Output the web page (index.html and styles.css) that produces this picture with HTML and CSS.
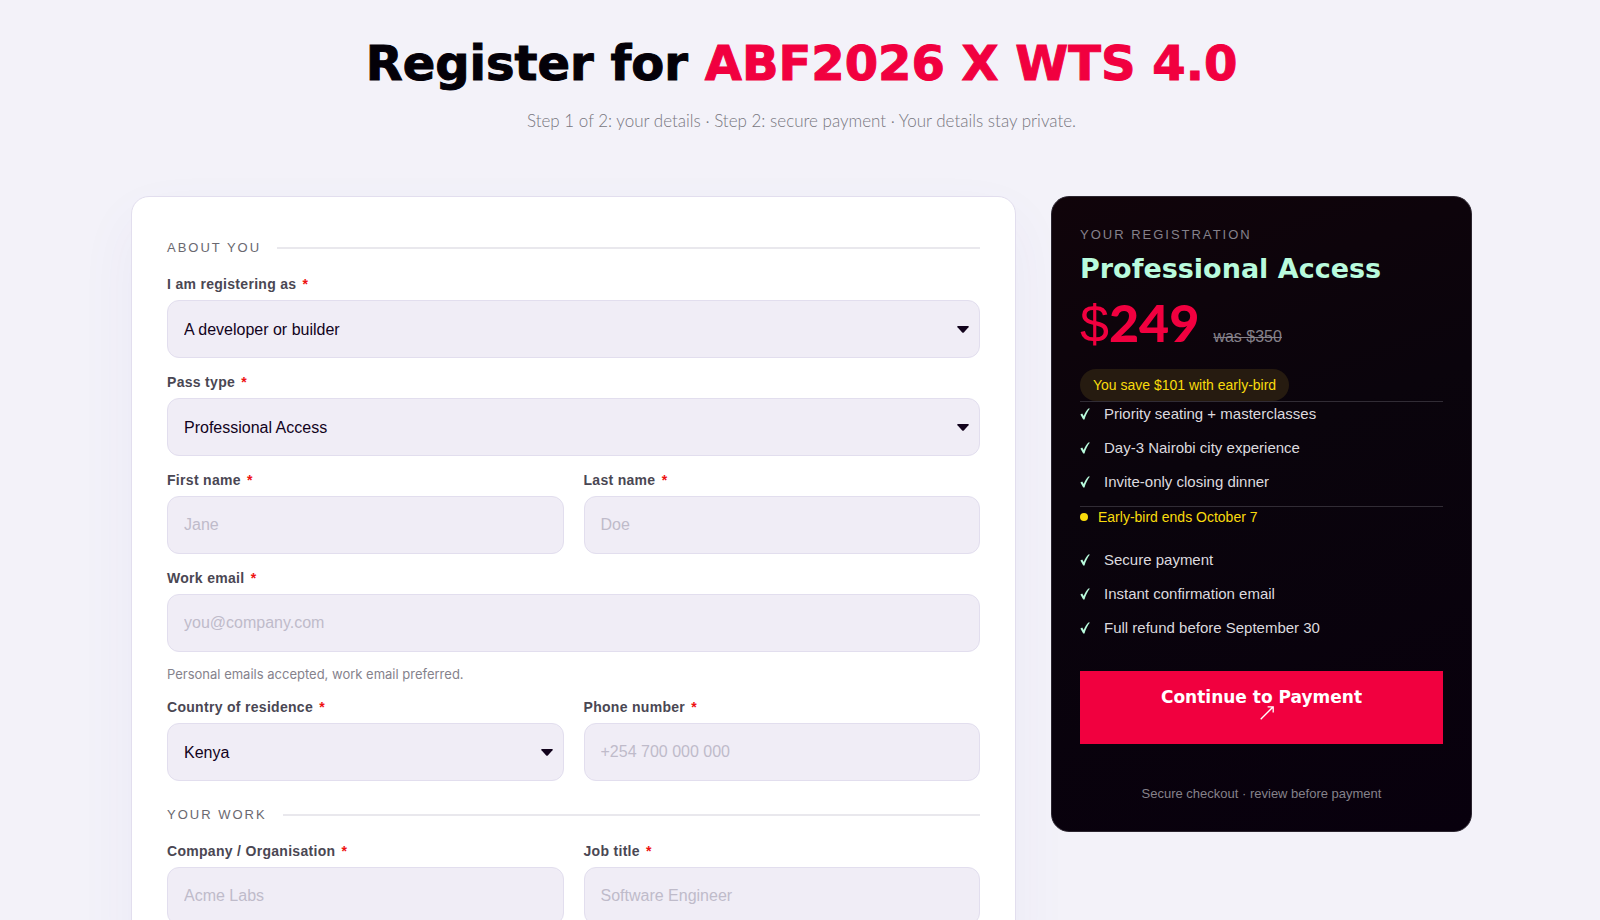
FILE: index.html
```html
<!DOCTYPE html>
<html lang="en">
<head>
  <meta charset="UTF-8">
  <meta name="viewport" content="width=device-width, initial-scale=1.0">
  <title>Register for ABF2026 X WTS 4.0</title>
  <link rel="stylesheet" href="styles.css">
</head>
<body>
  <!-- Shared icons -->
  <svg class="sprite" aria-hidden="true">
    <symbol id="tick" viewBox="0 0 10 12">
      <path d="M0.4 6.4 L2.2 5.4 L3.7 8 C5 5 6.5 2.4 8.4 0.6 L9.9 0.6 C7.6 3.6 5.8 7.2 4.5 11.4 L3.2 11.4 Z"/>
    </symbol>
    <symbol id="caret" viewBox="0 0 12 7">
      <path d="M1 0 H11 Q12.4 0.1 11.5 1.2 L7 6.3 Q6 7.3 5 6.3 L0.5 1.2 Q-0.4 0.1 1 0 Z"/>
    </symbol>
  </svg>

  <header class="page-header">
    <h1>Register for <span>ABF2026 X WTS 4.0</span></h1>
    <p>Step 1 of 2: your details · Step 2: secure payment · Your details stay private.</p>
  </header>

  <main class="layout">
    <!-- Left: registration form -->
    <form class="form-card" id="register">
      <h2 class="section-title">About you</h2>

      <div class="field">
        <label for="role">I am registering as <span class="req">*</span></label>
        <div class="select-box">
          <select id="role">
            <option>A developer or builder</option>
          </select>
          <svg class="caret"><use href="#caret"/></svg>
        </div>
      </div>

      <div class="field">
        <label for="pass">Pass type <span class="req">*</span></label>
        <div class="select-box">
          <select id="pass">
            <option>Professional Access</option>
          </select>
          <svg class="caret"><use href="#caret"/></svg>
        </div>
      </div>

      <div class="row">
        <div class="field">
          <label for="first">First name <span class="req">*</span></label>
          <input id="first" type="text" placeholder="Jane">
        </div>
        <div class="field">
          <label for="last">Last name <span class="req">*</span></label>
          <input id="last" type="text" placeholder="Doe">
        </div>
      </div>

      <div class="field">
        <label for="email">Work email <span class="req">*</span></label>
        <input id="email" type="email" placeholder="you@company.com">
        <p class="hint">Personal emails accepted, work email preferred.</p>
      </div>

      <div class="row">
        <div class="field">
          <label for="country">Country of residence <span class="req">*</span></label>
          <div class="select-box">
            <select id="country">
              <option>Kenya</option>
            </select>
            <svg class="caret"><use href="#caret"/></svg>
          </div>
        </div>
        <div class="field">
          <label for="phone">Phone number <span class="req">*</span></label>
          <input id="phone" type="tel" placeholder="+254 700 000 000">
        </div>
      </div>

      <h2 class="section-title">Your work</h2>

      <div class="row">
        <div class="field">
          <label for="company">Company / Organisation <span class="req">*</span></label>
          <input id="company" type="text" placeholder="Acme Labs">
        </div>
        <div class="field">
          <label for="job">Job title <span class="req">*</span></label>
          <input id="job" type="text" placeholder="Software Engineer">
        </div>
      </div>
    </form>

    <!-- Right: order summary -->
    <aside class="summary">
      <p class="eyebrow">Your registration</p>
      <h2 class="pass-name">Professional Access</h2>
      <div class="price">
        <span class="amount">$<b>249</b></span>
        <s>was $350</s>
      </div>
      <span class="badge">You save $101 with early-bird</span>

      <ul class="perks">
        <li><svg class="tick"><use href="#tick"/></svg>Priority seating + masterclasses</li>
        <li><svg class="tick"><use href="#tick"/></svg>Day-3 Nairobi city experience</li>
        <li><svg class="tick"><use href="#tick"/></svg>Invite-only closing dinner</li>
      </ul>

      <p class="deadline">Early-bird ends October 7</p>

      <ul class="trust">
        <li><svg class="tick"><use href="#tick"/></svg>Secure payment</li>
        <li><svg class="tick"><use href="#tick"/></svg>Instant confirmation email</li>
        <li><svg class="tick"><use href="#tick"/></svg>Full refund before September 30</li>
      </ul>

      <button class="pay-btn" type="submit" form="register">
        Continue to Payment
        <svg class="arrow" viewBox="0 0 14 14" aria-hidden="true"><path d="M0.7 13.3 L13 1 M7.6 0.8 H13.2 V6.4"/></svg>
      </button>
      <p class="checkout-note">Secure checkout · review before payment</p>
    </aside>
  </main>
</body>
</html>
```

FILE: styles.css
```css
:root {
  --red: #f1003f;
  --ink: #12031c;
  --mint: #b9fbdd;
  --yellow: #f9dc0c;
  --field: #f0edf6;
  --border: #e2deee;
  --display: "DejaVu Sans", Verdana, sans-serif;
}
* {
  box-sizing: border-box;
}
body {
  margin: 0;
  padding: 35px 128px 40px 131px;
  background: #f3f2f9;
  color: var(--ink);
  font-family: "Liberation Sans", Arial, sans-serif;
  font-size: 16px;
}
h1, h2, p, ul {
  margin: 0;
  padding: 0;
}
ul {
  list-style: none;
}
.sprite {
  display: none;
}
/* Header */
.page-header {
  text-align: center;
  margin-bottom: 62px;
}
.page-header h1 {
  font-family: var(--display);
  font-size: 48px;
  line-height: 56px;
  font-weight: 700;
  -webkit-text-stroke: 1px currentColor;
  color: #040108;
}
.page-header h1 span {
  color: var(--red);
}
.page-header p {
  margin-top: 17px;
  font-family: Lato, sans-serif;
  font-weight: 300;
  font-size: 17px;
  line-height: 26px;
  color: #78777f;
}
/* Layout */
.layout {
  display: grid;
  grid-template-columns: minmax(0, 1fr) 421px;
  gap: 35px;
  align-items: start;
}
/* Form */
.form-card {
  display: flex;
  flex-direction: column;
  gap: 15px;
  padding: 32px 35px 34px;
  background: #fff;
  border: 1px solid var(--border);
  border-radius: 18px;
  box-shadow: 0 24px 60px rgba(70, 50, 170, 0.05);
}
.section-title {
  display: flex;
  align-items: center;
  gap: 16px;
  margin: 11px 0 4px;
  font-size: 13px;
  line-height: 16px;
  font-weight: 400;
  letter-spacing: 2px;
  text-transform: uppercase;
  color: #6a6870;
}
.section-title::after {
  content: "";
  flex: 1;
  height: 2px;
  background: #e9e8ed;
}
.row {
  display: grid;
  grid-template-columns: 1fr 1fr;
  gap: 20px;
}
.field {
  display: flex;
  flex-direction: column;
  gap: 7px;
}
.field label {
  font-size: 14px;
  line-height: 18px;
  font-weight: 700;
  letter-spacing: 0.3px;
  color: #4a4753;
}
.req {
  margin-left: 2px;
  color: #ee1111;
}
input, select {
  width: 100%;
  height: 58px;
  padding: 0 16px;
  border: 1px solid var(--border);
  border-radius: 12px;
  background: var(--field);
  font-family: inherit;
  font-size: 16px;
  color: var(--ink);
  appearance: none;
}
input::placeholder {
  color: #bfbbca;
  opacity: 1;
}
.select-box {
  position: relative;
}
.select-box select {
  display: block;
}
.caret {
  position: absolute;
  right: 11px;
  top: 26px;
  width: 12px;
  height: 7px;
  fill: var(--ink);
  pointer-events: none;
}
.hint {
  padding-top: 7px;
  font-family: Inter, sans-serif;
  font-size: 13px;
  line-height: 17px;
  color: #85828c;
}
/* Summary */
.summary {
  display: flex;
  flex-direction: column;
  padding: 28px;
  border: 1px solid #2b252f;
  border-radius: 18px;
  background: linear-gradient(160deg, #10040a 0%, #0a040c 40%, #08000d 100%);
  color: #dcdadf;
}
.eyebrow {
  font-size: 13px;
  line-height: 20px;
  letter-spacing: 2px;
  text-transform: uppercase;
  color: #85818a;
}
.pass-name {
  margin-top: 7px;
  font-family: var(--display);
  font-size: 27px;
  line-height: 34px;
  font-weight: 700;
  color: var(--mint);
}
.price {
  display: flex;
  align-items: baseline;
  gap: 14px;
  height: 60px;
  margin: 6px 0 17px;
}
.amount {
  font-size: 52px;
  line-height: 60px;
  color: var(--red);
}
.amount b {
  font-family: Lato, sans-serif;
  font-weight: 900;
}
.price s {
  color: #85818a;
}
.badge {
  align-self: flex-start;
  padding: 8px 13px;
  border-radius: 16px;
  background: #261b10;
  font-size: 14px;
  line-height: 16px;
  color: var(--yellow);
}
.perks, .trust {
  display: flex;
  flex-direction: column;
  gap: 12px;
  font-size: 15px;
  line-height: 22px;
}
.perks {
  padding: 1px 0 13px;
  border-top: 1px solid #312c35;
  border-bottom: 1px solid #312c35;
}
.perks li, .trust li {
  display: flex;
  align-items: center;
  gap: 14px;
}
.tick {
  width: 10px;
  height: 12px;
  fill: var(--mint);
}
.deadline {
  display: flex;
  align-items: center;
  gap: 10px;
  margin: 0 0 22px;
  font-size: 14px;
  line-height: 20px;
  color: var(--yellow);
}
.deadline::before {
  content: "";
  width: 8px;
  height: 8px;
  border-radius: 50%;
  background: var(--yellow);
}
.pay-btn {
  display: flex;
  flex-direction: column;
  align-items: center;
  margin-top: 32px;
  padding: 18px 24px 24px;
  border: 0;
  background: var(--red);
  font-family: var(--display);
  font-size: 17px;
  line-height: 17px;
  font-weight: 700;
  color: #fff;
  cursor: pointer;
}
.arrow {
  width: 14px;
  height: 14px;
  margin-left: 11px;
  fill: none;
  stroke: #fff;
  stroke-width: 1.3;
}
.checkout-note {
  margin-top: 41px;
  font-size: 13px;
  line-height: 18px;
  text-align: center;
  color: #85818a;
}
/* Responsive */
@media (max-width: 1100px) {
  body {
    padding: 24px 20px;
  }
  .layout {
    grid-template-columns: 1fr;
  }
}
@media (max-width: 600px) {
  .page-header h1 {
    font-size: 30px;
    line-height: 38px;
  }
  .row {
    grid-template-columns: 1fr;
    gap: 14px;
  }
}
```
